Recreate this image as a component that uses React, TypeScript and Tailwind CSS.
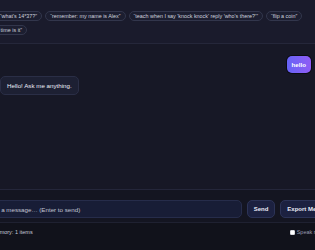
import { useState } from "react";

const SUGGESTIONS = [
  "“tell me something fun”",
  "“what's 14*37?”",
  "“remember: my name is Alex”",
  "“teach when I say 'knock knock' reply 'who's there?'”",
  "“flip a coin”",
  "“what's the day?”",
  "“what time is it”",
];

type Msg = { from: "user" | "bot"; text: string };

const MESSAGES: Msg[] = [
  { from: "user", text: "hello" },
  { from: "bot", text: "Hello! Ask me anything." },
];

export default function App() {
  const [draft, setDraft] = useState("");
  const [speak, setSpeak] = useState(false);

  return (
    <div className="h-[250px] w-[315px] overflow-hidden bg-[#171826] font-['Liberation_Sans',Arial,sans-serif]">
      <div className="-ml-[34px] flex h-full w-[380px] flex-col">
        {/* suggestion chips */}
        <div className="border-b border-[#25273a] bg-[#1a1b2c] pb-[8px] pt-[11px]">
          <div className="-ml-[39px] flex w-[400px] flex-wrap gap-x-[3px] gap-y-[4px]">
            {SUGGESTIONS.map((s) => (
              <button
                key={s}
                className="h-[10px] whitespace-nowrap rounded-full border border-[#32364c] bg-[#1c1e30] px-[4px] text-[5.4px] leading-[8px] text-[#cfd2de]"
              >
                {s}
              </button>
            ))}
          </div>
        </div>

        {/* messages */}
        <div className="flex flex-1 flex-col gap-[3px] pl-[34px] pr-[35px] pt-[12px]">
          {MESSAGES.map((m, i) =>
            m.from === "user" ? (
              <div key={i} className="flex justify-end">
                <div className="rounded-[5px] bg-gradient-to-r from-[#6663f6] to-[#8f5cf5] px-[5px] py-[5px] text-[6.2px] font-semibold leading-[7px] text-white shadow-[0_0_0_1px_#0b0b14]">
                  {m.text}
                </div>
              </div>
            ) : (
              <div key={i} className="flex justify-start">
                <div className="rounded-[5px] border border-[#2a2e46] bg-[#1d2033] px-[6px] py-[5px] text-[6.2px] font-medium leading-[7px] text-[#eceef7]">
                  {m.text}
                </div>
              </div>
            )
          )}
        </div>

        {/* composer */}
        <div className="flex gap-[5px] border-t border-[#24263a] bg-[#141521] pb-[4px] pl-[13px] pr-[8px] pt-[10px]">
          <input
            value={draft}
            onChange={(e) => setDraft(e.target.value)}
            placeholder="Type a message… (Enter to send)"
            className="h-[18px] min-w-0 flex-1 rounded-[5px] border border-[#262c4a] bg-[#181d36] px-[6px] text-[6.2px] text-[#dfe2ee] outline-none placeholder:text-[#c3c6d4]"
          />
          <button className="h-[18px] rounded-[5px] border border-[#2c3356] bg-[#1c2140] px-[6px] text-[6px] font-semibold text-[#e8eaf5]">
            Send
          </button>
          <button className="h-[18px] whitespace-nowrap rounded-[5px] border border-[#2c3356] bg-[#1c2140] px-[6px] text-[6px] font-semibold text-[#e8eaf5]">
            Export Memory
          </button>
        </div>

        {/* footer */}
        <div className="flex h-[28px] items-start justify-between border-t border-[#1f2131] bg-[#11121b] pl-[26px] pr-[16px] pt-[6px]">
          <span className="text-[5.5px] leading-[7px] text-[#c5c8d6]">Memory: 1 items</span>
          <label className="flex items-center gap-[2px] text-[5.5px] leading-[7px] text-[#9a9db0]">
            <input
              type="checkbox"
              checked={speak}
              onChange={(e) => setSpeak(e.target.checked)}
              className="m-0 h-[5px] w-[5px] appearance-none rounded-[1px] border border-[#d8d8de] bg-white checked:bg-[#6366f1]"
            />
            Speak replies
          </label>
        </div>
      </div>
    </div>
  );
}
